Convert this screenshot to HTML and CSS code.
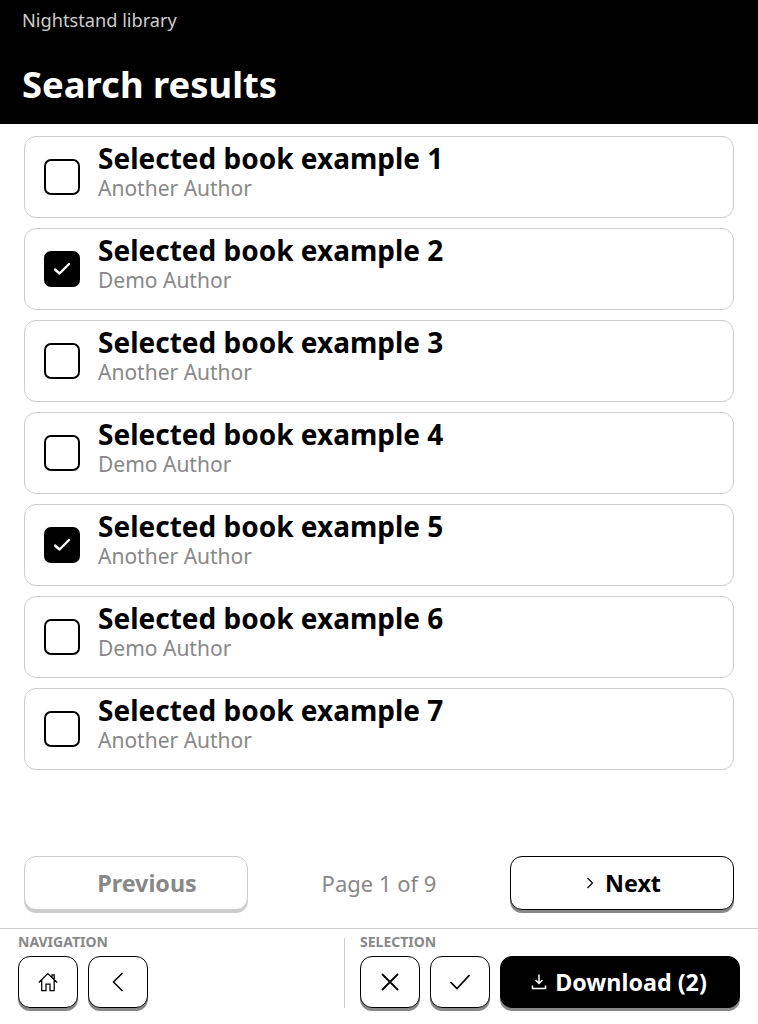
FILE: index.html
```html
<!DOCTYPE html>
<html lang="en">
<head>
    <meta charset="UTF-8">
    <meta name="viewport" content="width=device-width, initial-scale=1.0">
    <title>Search results</title>
    <link rel="stylesheet" href="styles.css">
</head>
<body>
    <header class="top-bar">
        <div class="app-name">Nightstand library</div>
        <h1 class="page-title">Search results</h1>
    </header>

    <main class="book-list">
        <div class="book-row">
            <span class="check"></span>
            <div class="book-text">
                <div class="book-title">Selected book example 1</div>
                <div class="book-author">Another Author</div>
            </div>
        </div>
        <div class="book-row">
            <span class="check checked">
                <svg width="18" height="14" viewBox="0 0 18 14"><path d="M2 7.5 L6.5 11.5 L16 2" fill="none" stroke="#fff" stroke-width="2.4" stroke-linecap="round" stroke-linejoin="round"/></svg>
            </span>
            <div class="book-text">
                <div class="book-title">Selected book example 2</div>
                <div class="book-author">Demo Author</div>
            </div>
        </div>
        <div class="book-row">
            <span class="check"></span>
            <div class="book-text">
                <div class="book-title">Selected book example 3</div>
                <div class="book-author">Another Author</div>
            </div>
        </div>
        <div class="book-row">
            <span class="check"></span>
            <div class="book-text">
                <div class="book-title">Selected book example 4</div>
                <div class="book-author">Demo Author</div>
            </div>
        </div>
        <div class="book-row">
            <span class="check checked">
                <svg width="18" height="14" viewBox="0 0 18 14"><path d="M2 7.5 L6.5 11.5 L16 2" fill="none" stroke="#fff" stroke-width="2.4" stroke-linecap="round" stroke-linejoin="round"/></svg>
            </span>
            <div class="book-text">
                <div class="book-title">Selected book example 5</div>
                <div class="book-author">Another Author</div>
            </div>
        </div>
        <div class="book-row">
            <span class="check"></span>
            <div class="book-text">
                <div class="book-title">Selected book example 6</div>
                <div class="book-author">Demo Author</div>
            </div>
        </div>
        <div class="book-row">
            <span class="check"></span>
            <div class="book-text">
                <div class="book-title">Selected book example 7</div>
                <div class="book-author">Another Author</div>
            </div>
        </div>
    </main>

    <!-- Pagination -->
    <div class="pager">
        <button class="btn page-btn disabled">
            <svg class="hidden-icon" width="12" height="14" viewBox="0 0 12 14"></svg>
            Previous
        </button>
        <div class="page-info">Page 1 of 9</div>
        <button class="btn page-btn">
            <svg width="12" height="14" viewBox="0 0 12 14"><path d="M4.5 2 L9.5 7 L4.5 12" fill="none" stroke="#000" stroke-width="1.2"/></svg>
            Next
        </button>
    </div>

    <!-- Bottom toolbar -->
    <footer class="toolbar">
        <section class="tool-group nav-group">
            <div class="tool-label">NAVIGATION</div>
            <div class="tool-buttons">
                <button class="btn icon-btn">
                    <svg width="20" height="20" viewBox="0 0 20 20" fill="none" stroke="#000" stroke-width="1.25"><path d="M0.8 10.5 L9.8 1.5 L19.2 10.5 M14 5 V2.8 H16.2 V8 M3.7 8 V18.6 H8 V12 H12 V18.6 H16.2 V8"/></svg>
                </button>
                <button class="btn icon-btn">
                    <svg width="20" height="20" viewBox="0 0 20 20" fill="none" stroke="#000" stroke-width="1.5"><path d="M14.5 1 L5.5 10 L14.5 19"/></svg>
                </button>
            </div>
        </section>
        <section class="tool-group select-group">
            <div class="tool-label">SELECTION</div>
            <div class="tool-buttons">
                <button class="btn icon-btn">
                    <svg width="20" height="20" viewBox="0 0 20 20" fill="none" stroke="#000" stroke-width="1.8"><path d="M2 2 L18 18 M18 2 L2 18"/></svg>
                </button>
                <button class="btn icon-btn">
                    <svg width="20" height="16" viewBox="0 0 20 16" fill="none" stroke="#000" stroke-width="1.7"><path d="M0.5 8 L7 14.5 L19.5 1"/></svg>
                </button>
                <button class="btn download-btn">
                    <svg width="16" height="16" viewBox="0 0 16 16" fill="none" stroke="#fff" stroke-width="1.5"><path d="M8 0.5 V9.5 M4.5 6 L8 9.5 L11.5 6 M1.5 11.5 V14.5 H14.5 V11.5"/></svg>
                    Download (2)
                </button>
            </div>
        </section>
    </footer>
</body>
</html>
```
FILE: styles.css
```css
/* Reset default browser styles */
* {
    margin: 0;
    padding: 0;
    box-sizing: border-box;
}

body {
    width: 758px;
    height: 1024px;
    overflow: hidden;
    background-color: #fff;
    color: #000;
    font-family: "Noto Sans", sans-serif;
    display: flex;
    flex-direction: column;
}

/* Header styles */
.top-bar {
    height: 124px;
    flex-shrink: 0;
    background-color: #000;
    color: #fff;
    padding: 8px 22px 0;
}

.app-name {
    font-size: 18.2px;
    line-height: 25px;
    color: #ccc;
}

.page-title {
    font-size: 36.4px;
    line-height: 46px;
    font-weight: 700;
    margin-top: 28px;
}

/* Book list */
.book-list {
    flex: 1;
    display: flex;
    flex-direction: column;
    gap: 10px;
    padding: 12px 24px 0;
}

.book-row {
    height: 82px;
    border: 1px solid #ccc;
    border-radius: 12px;
    display: flex;
    align-items: center;
    padding: 0 19px;
    gap: 18px;
}

.check {
    width: 36px;
    height: 36px;
    flex-shrink: 0;
    border: 2px solid #000;
    border-radius: 7px;
    display: flex;
    align-items: center;
    justify-content: center;
}

.check.checked {
    background-color: #000;
}

.book-text {
    padding-bottom: 14px;
}

.book-title {
    font-size: 28px;
    line-height: 36px;
    font-weight: 700;
}

.book-author {
    font-size: 21px;
    line-height: 24px;
    color: #888;
}

/* Buttons */
.btn {
    font-family: inherit;
    background-color: #fff;
    color: #000;
    border: 1px solid #000;
    border-radius: 12px;
    box-shadow: 0 3px 0 #888;
    display: flex;
    align-items: center;
    justify-content: center;
}

/* Pagination */
.pager {
    height: 72px;
    flex-shrink: 0;
    padding: 0 24px;
    display: flex;
    justify-content: space-between;
    align-items: flex-start;
}

.page-btn {
    width: 224px;
    height: 54px;
    font-size: 23.3px;
    font-weight: 700;
    gap: 10px;
}

.page-btn.disabled {
    color: #888;
    border-color: #ccc;
    box-shadow: 0 3px 0 #ccc;
}

.hidden-icon {
    visibility: hidden;
}

.page-info {
    font-size: 22px;
    line-height: 54px;
    color: #888;
}

/* Bottom toolbar */
.toolbar {
    height: 96px;
    flex-shrink: 0;
    border-top: 1px solid #ccc;
    padding: 4px 18px 0;
    display: flex;
}

.nav-group {
    width: 327px;
}

.select-group {
    border-left: 1px solid #ccc;
    padding-left: 15px;
    height: 70px;
    margin-top: 5px;
}

.select-group .tool-label {
    margin-top: -5px;
}

.tool-label {
    font-size: 14px;
    line-height: 18px;
    font-weight: 700;
    color: #888;
    margin-bottom: 5px;
}

.tool-buttons {
    display: flex;
    gap: 10px;
}

.icon-btn {
    width: 60px;
    height: 52px;
}

.download-btn {
    width: 240px;
    height: 52px;
    padding-right: 2px;
    background-color: #000;
    color: #fff;
    font-size: 23.3px;
    font-weight: 700;
    gap: 8px;
}
```
